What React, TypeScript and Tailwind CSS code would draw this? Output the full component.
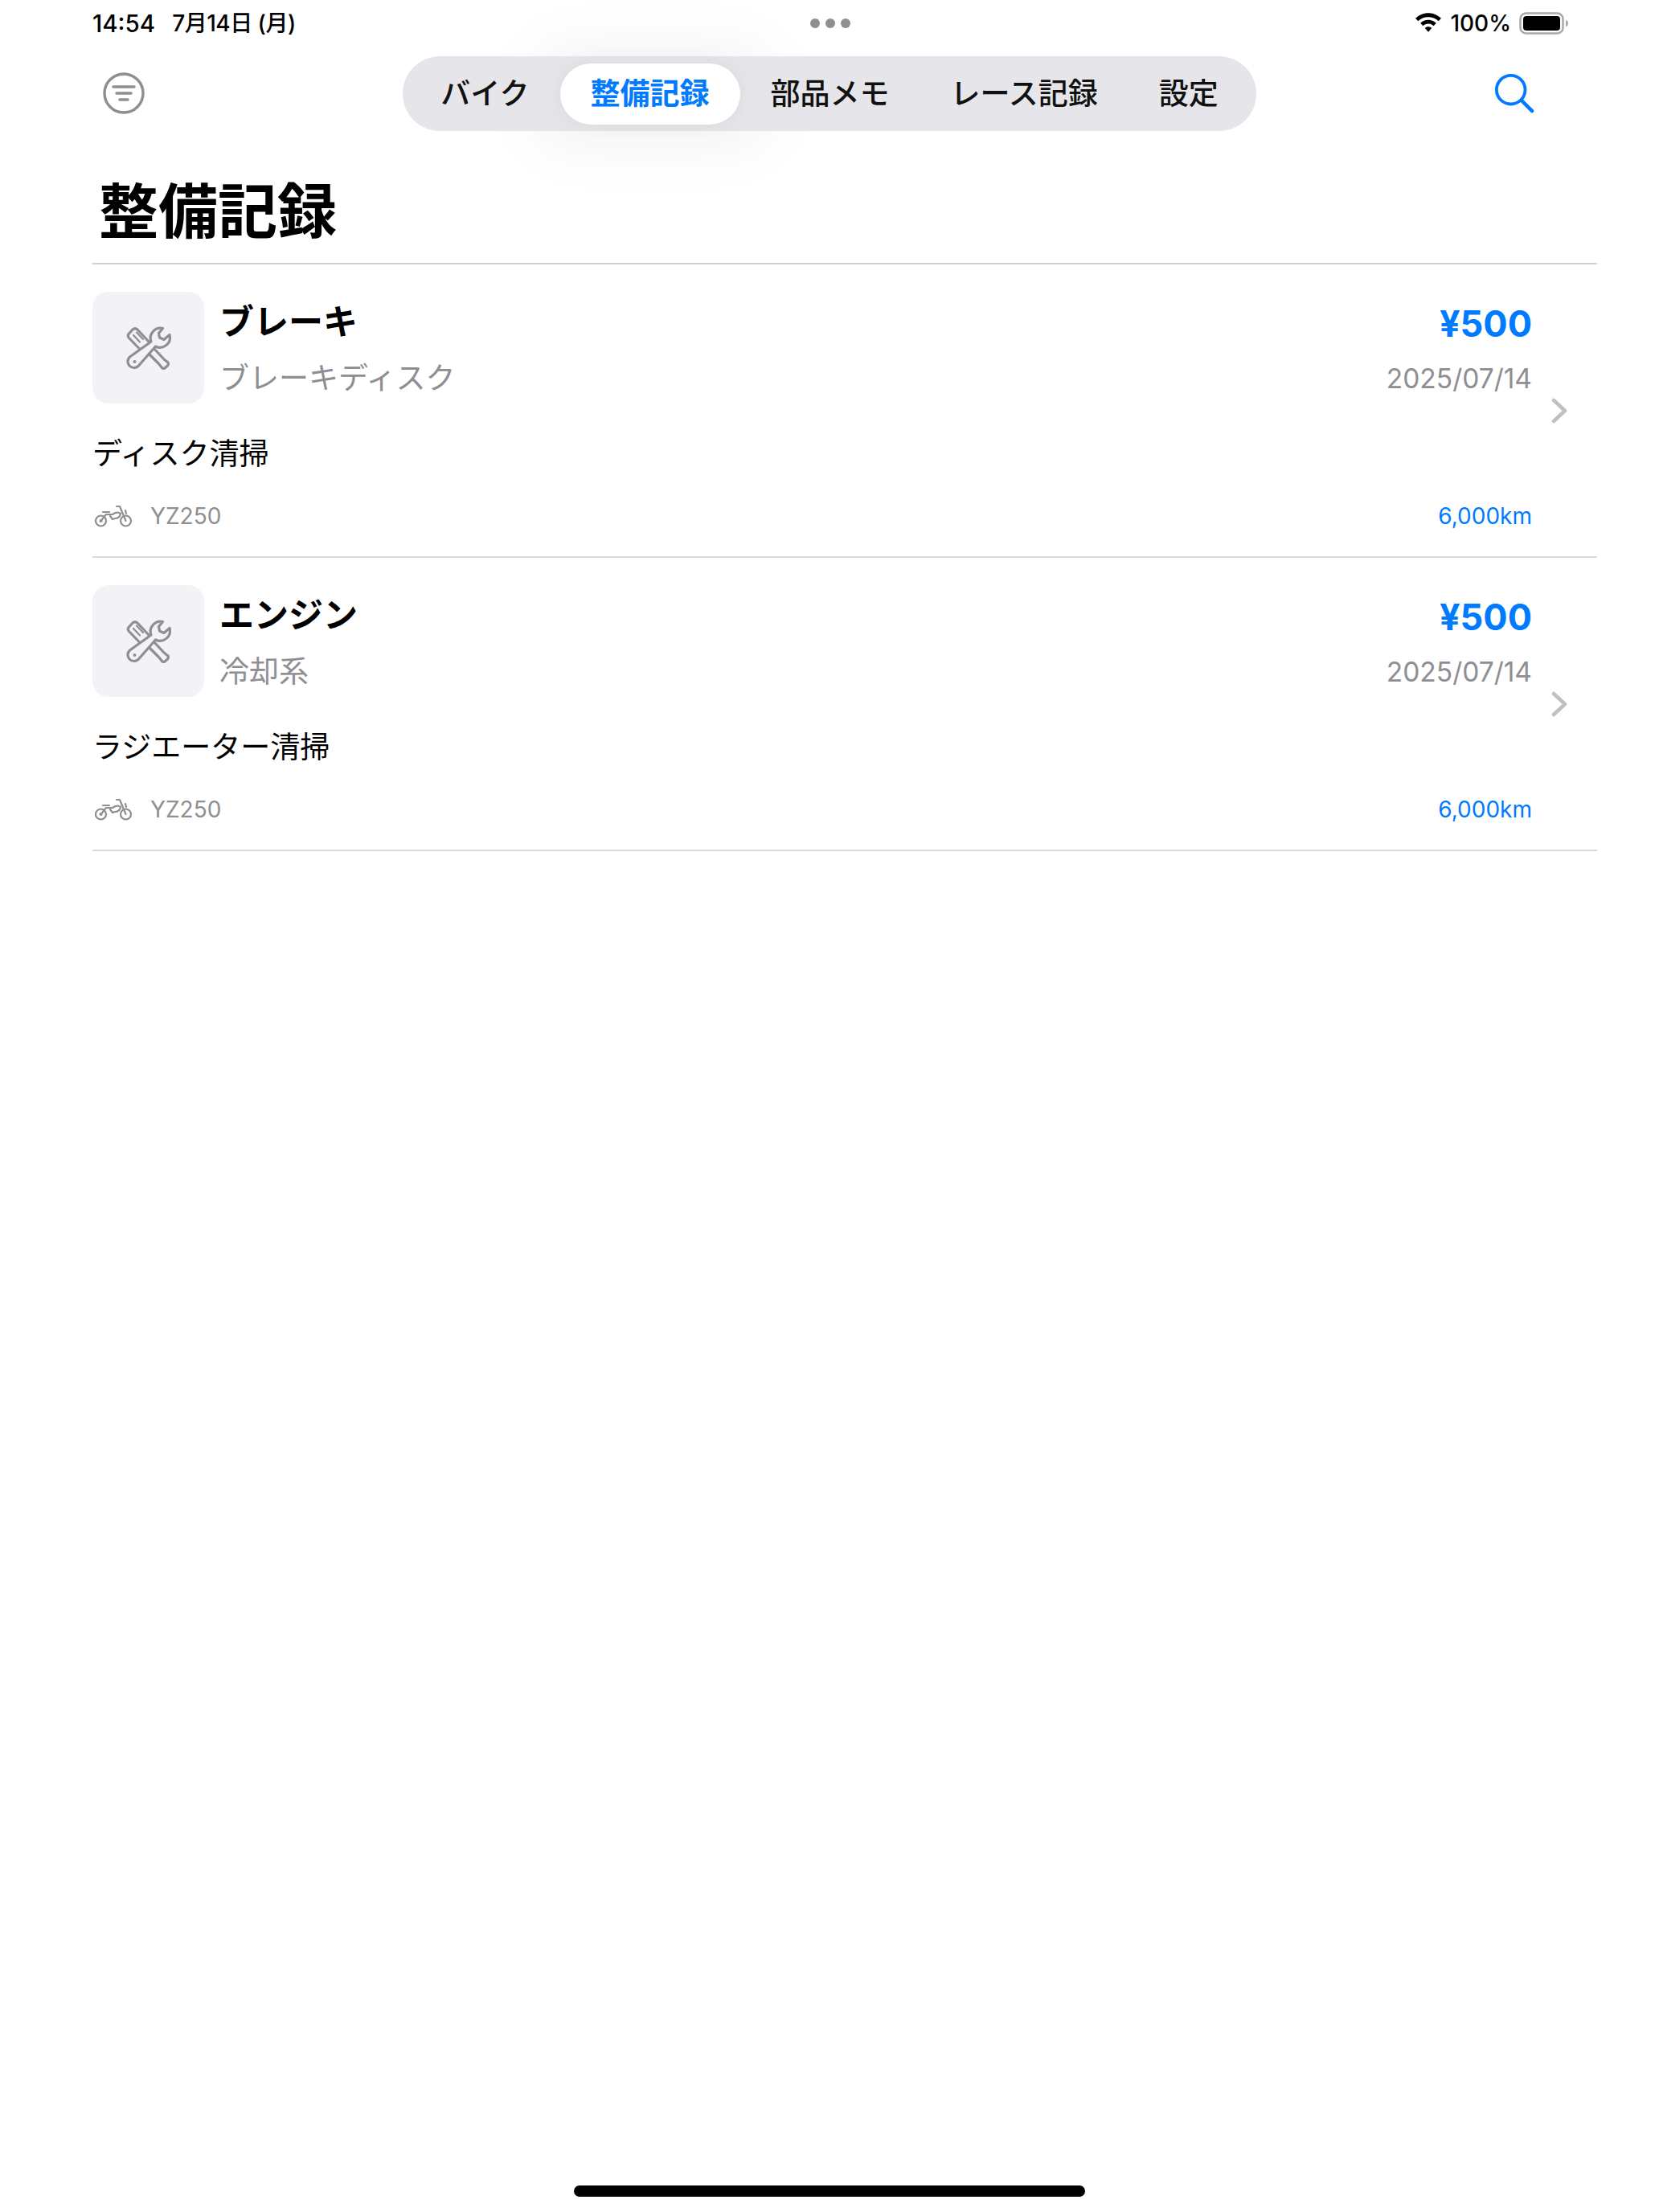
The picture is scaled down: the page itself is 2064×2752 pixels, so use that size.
const tabs = ['バイク', '整備記録', '部品メモ', 'レース記録', '設定']

const records = [
  { title: 'ブレーキ', part: 'ブレーキディスク', note: 'ディスク清掃' },
  { title: 'エンジン', part: '冷却系', note: 'ラジエーター清掃' },
]

function ToolsIcon() {
  return (
    <svg width="56" height="54" viewBox="-1 -1 56 54" fill="none" stroke="#8e8e93" strokeWidth="3.2" strokeLinejoin="round" strokeLinecap="round">
      <path d="M22 28 L16 27.5 L2.5 13.5 Q0 10.5 2.5 8 L7 3 Q10 0.5 13 3 L27 18" />
      <path d="M8 10 L16 18.5 M12 6.5 L20 15" strokeWidth="2.2" />
      <path d="M33 26 L46 40 L51 44 Q52 46 50.5 48 L47 51 Q45 52 43.5 50.5 L39.5 45.5 L27 33" />
      <path d="M44.5 1.5 A12.5 12.5 0 0 0 30 18 L3.5 37 A7.5 7.5 0 0 0 14 48.5 L35.5 24 A12.5 12.5 0 0 0 53 9.5 L46 15.5 L40.5 13 L39.5 7.5 Z" fill="#f2f2f7" />
      <circle cx="9.5" cy="43" r="2" fill="#8e8e93" stroke="none" />
    </svg>
  )
}

function BikeIcon() {
  return (
    <svg width="46" height="28" viewBox="0 0 46 28" fill="none" stroke="#8e8e93" strokeWidth="2.2" strokeLinecap="round" strokeLinejoin="round">
      <circle cx="7.5" cy="20" r="6.5" />
      <circle cx="38.5" cy="20" r="6.5" />
      <circle cx="7.5" cy="20" r="1" />
      <path d="M10 9 H18" />
      <path d="M7.5 20 L14 12 H22 Q28 8 32 11 Q31 17 25 17 L22 18 L19 14" />
      <path d="M27 2 H31 L38.5 20" />
      <path d="M38 7 L39 11" />
    </svg>
  )
}

function RecordRow({ title, part, note }: { title: string; part: string; note: string }) {
  return (
    <div className="flex items-center border-b-2 border-[#d9d9dc] pt-[34px] pb-[30px]">
      <div className="flex-1">
        <div className="flex items-start gap-[19px]">
          <div className="flex h-[139px] w-[139px] items-center justify-center rounded-[20px] bg-[#f2f2f7]">
            <ToolsIcon />
          </div>
          <div className="flex-1 pt-[9px]">
            <p className="text-[43px] leading-[56px] font-bold text-black">{title}</p>
            <p className="mt-[15px] text-[37px] leading-[56px] text-[#8e8e93]">{part}</p>
          </div>
          <div className="pt-[9px] text-right">
            <p className="text-[45px] leading-[62px] font-bold text-[#007aff]">¥500</p>
            <p className="mt-[9px] text-[33.5px] leading-[56px] text-[#8e8e93]">2025/07/14</p>
          </div>
        </div>
        <p className="mt-[38px] text-[37px] leading-[50px] text-black">{note}</p>
        <div className="mt-[32px] flex h-10 items-center">
          <div className="ml-[3px]">
            <BikeIcon />
          </div>
          <span className="ml-[23px] flex-1 text-[28px] text-[#8e8e93]">YZ250</span>
          <span className="text-[28px] text-[#007aff]">6,000km</span>
        </div>
      </div>
      <div className="ml-[24px] w-[57px]">
        <svg className="-translate-y-[2px]" width="22" height="32" viewBox="0 0 22 32" fill="none" stroke="#c0c0c3" strokeWidth="4.5" strokeLinecap="round" strokeLinejoin="round">
          <path d="M3 3 L17 16 L3 29" />
        </svg>
      </div>
    </div>
  )
}

export default function App() {
  return (
    <div className="flex min-h-[2752px] flex-col bg-white pr-[77px] pl-[115px] font-['Inter','Noto_Sans_CJK_JP',sans-serif]">
      {/* status bar */}
      <div className="grid h-[58px] grid-cols-3 items-center pr-[35px] text-[28px] font-medium text-black">
        <div className="flex items-center gap-[21px]">
          <span className="text-[29.5px]">14:54</span>
          <span className="tracking-[-0.5px]">7月14日 (月)</span>
        </div>
        <div className="flex justify-center gap-[7px]">
          <span className="h-3 w-3 rounded-full bg-[#8e8e93]" />
          <span className="h-3 w-3 rounded-full bg-[#8e8e93]" />
          <span className="h-3 w-3 rounded-full bg-[#8e8e93]" />
        </div>
        <div className="flex items-center justify-end gap-[10px]">
          <svg width="34" height="26" viewBox="0 0 32 24" fill="#000">
            <path d="M16 0 C10 0 5 2.4 1 6.2 L4 9.4 C7 6.4 11.2 4.6 16 4.6 C20.8 4.6 25 6.4 28 9.4 L31 6.2 C27 2.4 22 0 16 0Z" />
            <path d="M16 8 C12.4 8 9.2 9.4 6.8 11.8 L9.8 15 C11.4 13.4 13.6 12.4 16 12.4 C18.4 12.4 20.6 13.4 22.2 15 L25.2 11.8 C22.8 9.4 19.6 8 16 8Z" />
            <path d="M16 16 C14.4 16 13 16.6 12 17.6 L16 22 L20 17.6 C19 16.6 17.6 16 16 16Z" />
          </svg>
          <span>100%</span>
          <svg width="62" height="28" viewBox="0 0 62 28">
            <rect x="1.5" y="1.5" width="53" height="25" rx="7" fill="none" stroke="#a9a9ac" strokeWidth="2.5" />
            <rect x="5" y="5" width="46" height="18" rx="4" fill="#000" />
            <path d="M58 10 Q61 11 61 14 Q61 17 58 18 Z" fill="#a9a9ac" />
          </svg>
        </div>
      </div>

      {/* nav */}
      <div className="mt-3 grid h-[93px] grid-cols-[1fr_auto_1fr] items-center">
        <svg className="ml-[13px] -translate-y-[1px]" width="52" height="52" viewBox="0 0 52 52" fill="none" stroke="#8e8e93" strokeLinecap="round">
          <circle cx="26" cy="26" r="24" strokeWidth="3.4" />
          <path d="M13 18 H39 M17 26 H35 M21 34 H31" strokeWidth="3.4" />
        </svg>
        <div className="relative translate-x-[-19px]">
          <div className="absolute top-[-20px] left-[150px] h-[140px] w-[320px] rounded-full bg-black/[0.04] blur-[30px]" />
          <div className="relative flex h-[93px] items-center rounded-full bg-[#e5e5ea] px-[9px] text-[37px] font-medium text-[#111]">
            {tabs.map((tab) => (
              <span
                key={tab}
                className={
                  tab === '整備記録'
                    ? 'flex h-[76px] items-center rounded-full bg-white px-[38px] font-bold text-[#007aff] shadow-[0_0_24px_rgba(0,0,0,0.06)]'
                    : 'flex h-[76px] items-center px-[38px]'
                }
              >
                {tab}
              </span>
            ))}
          </div>
        </div>
        <svg className="mr-[78px] -translate-y-[1px] justify-self-end" width="50" height="50" viewBox="0 0 52 52" fill="none" stroke="#007aff" strokeLinecap="round">
          <circle cx="21.5" cy="21.5" r="18.5" strokeWidth="4" />
          <path d="M35 35 L49 49" strokeWidth="4.6" />
        </svg>
      </div>

      <h1 className="mt-[55px] border-b-2 border-[#d1d1d6] pb-[19px] pl-2 text-[74px] leading-[90px] font-bold text-black">整備記録</h1>

      {records.map((record) => (
        <RecordRow key={record.title} {...record} />
      ))}

      {/* home indicator */}
      <div className="mt-auto mb-[19px] flex translate-x-[-19px] justify-center">
        <div className="h-[14px] w-[636px] rounded-full bg-black" />
      </div>
    </div>
  )
}
